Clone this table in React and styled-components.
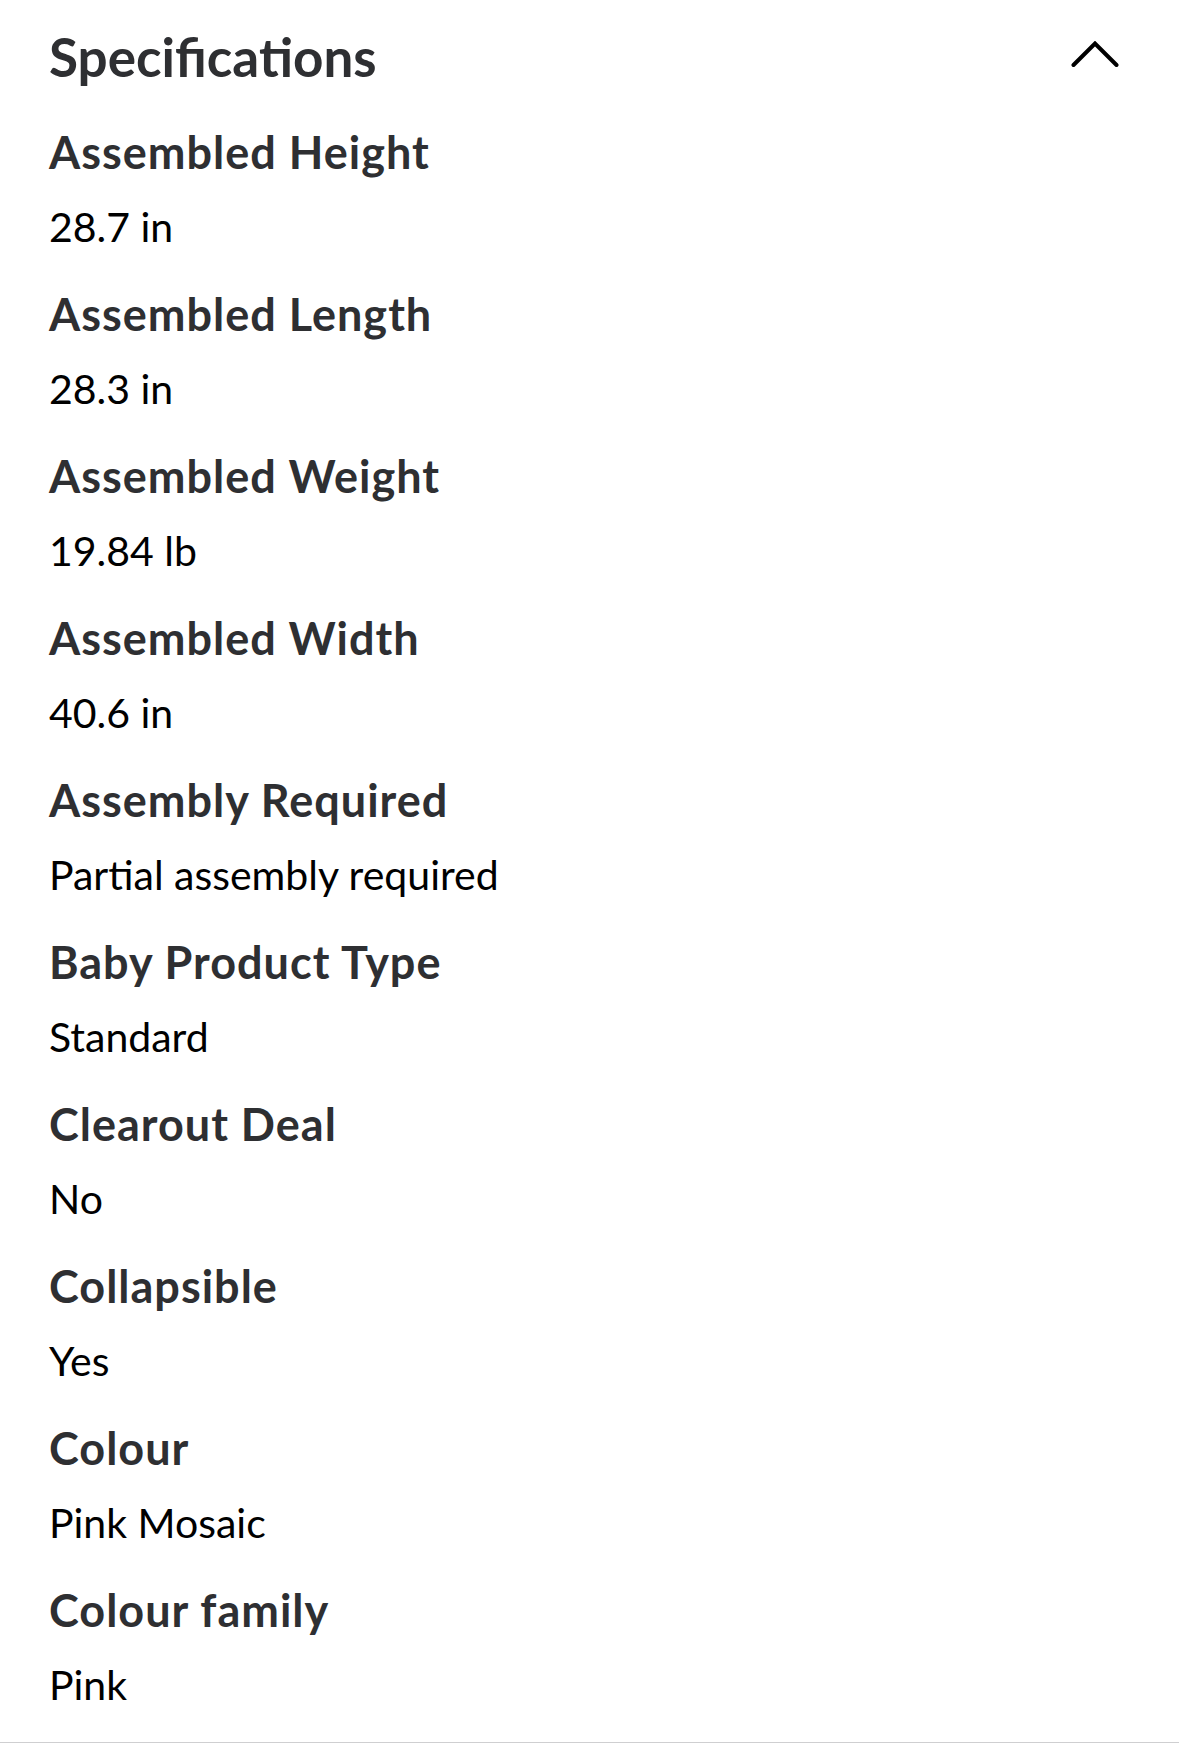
import React from "react"
import styled, { createGlobalStyle } from "styled-components"

const GlobalStyle = createGlobalStyle`
  body {
    margin: 0;
    background: #fff;
    font-family: Lato, "Open Sans", sans-serif;
  }
`

const Panel = styled.section`
  padding: 25px 0 33px 49px;
  border-bottom: 2px solid #cfcfd1;
`

const Header = styled.div`
  display: flex;
  justify-content: space-between;
  align-items: center;
`

const Title = styled.h2`
  margin: 0;
  font-size: 53px;
  line-height: 64px;
  font-weight: 700;
  color: #2e2f32;
`

const Toggle = styled.button`
  display: flex;
  align-items: center;
  justify-content: center;
  width: 72px;
  height: 64px;
  margin: -4px 48px 0 0;
  padding: 0;
  border: 0;
  background: none;
  color: #000;
`

const SpecList = styled.dl`
  margin: 37px 0 0;
  display: flex;
  flex-direction: column;
  gap: 37px;
`

const Spec = styled.div`
  display: flex;
  flex-direction: column;
  gap: 24px;
`

const Label = styled.dt`
  font-size: 45px;
  line-height: 52px;
  letter-spacing: 1px;
  font-weight: 700;
  color: #2e2f32;
`

const Value = styled.dd`
  margin: 0;
  font-size: 41px;
  line-height: 49px;
  font-weight: 400;
  color: #000;
`

const specs = [
  ["Assembled Height", "28.7 in"],
  ["Assembled Length", "28.3 in"],
  ["Assembled Weight", "19.84 lb"],
  ["Assembled Width", "40.6 in"],
  ["Assembly Required", "Partial assembly required"],
  ["Baby Product Type", "Standard"],
  ["Clearout Deal", "No"],
  ["Collapsible", "Yes"],
  ["Colour", "Pink Mosaic"],
  ["Colour family", "Pink"],
]

const ChevronUp = () => (
  <svg width="48" height="28" viewBox="0 0 48 28" fill="none">
    <path
      d="M2.5 24 L24 2.5 L45.5 24"
      stroke="currentColor"
      strokeWidth="4"
      strokeLinecap="round"
      strokeLinejoin="miter"
    />
  </svg>
)

const App = () => (
  <>
    <GlobalStyle />
    <Panel>
      <Header>
        <Title>Specifications</Title>
        <Toggle aria-label="Collapse specifications">
          <ChevronUp />
        </Toggle>
      </Header>
      <SpecList>
        {specs.map(([label, value]) => (
          <Spec key={label}>
            <Label>{label}</Label>
            <Value>{value}</Value>
          </Spec>
        ))}
      </SpecList>
    </Panel>
  </>
)

export default App
